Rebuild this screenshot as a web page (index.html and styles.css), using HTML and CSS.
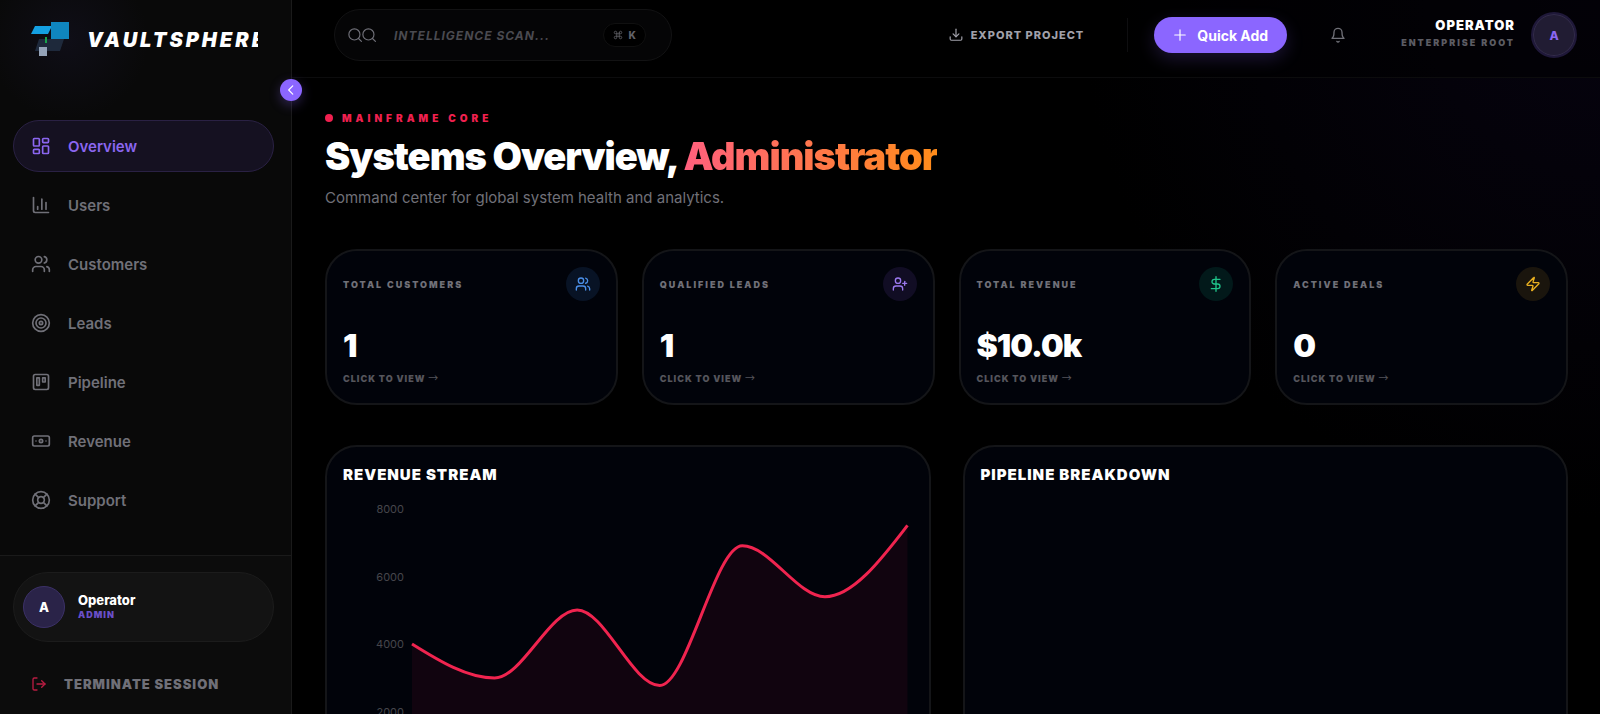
FILE: index.html
```html
<!DOCTYPE html>
<html lang="en">
<head>
<meta charset="UTF-8">
<meta name="viewport" content="width=device-width, initial-scale=1.0">
<title>Vaultsphere</title>
<link rel="stylesheet" href="styles.css">
</head>
<body>
<div class="app">
    <aside class="sidebar">
        <div class="brand">
            <svg class="brand-logo" viewBox="0 0 40 36" aria-hidden="true">
                <path d="M8 17h25l-4 12H4z" fill="#1e293b"/>
                <path d="M4 4h17l-4 8H0z" fill="#14a0e2"/>
                <path d="M20 0h18v17H20z" fill="#0f86bf"/>
                <path d="M14 15h2v6h-2z" fill="#16a34a"/>
                <path d="M8 25h8v9H8z" fill="#94a3b8"/>
            </svg>
            <span class="brand-name">VAULTSPHERE</span>
        </div>
        <button class="collapse" aria-label="Collapse sidebar">
            <svg class="icon" viewBox="0 0 24 24"><path d="m15 19-7-7 7-7"/></svg>
        </button>

        <nav class="nav">
            <a class="nav-item active" href="#">
                <svg class="icon" viewBox="0 0 24 24"><rect x="3" y="3" width="7" height="9" rx="1"/><rect x="14" y="3" width="7" height="5" rx="1"/><rect x="14" y="12" width="7" height="9" rx="1"/><rect x="3" y="16" width="7" height="5" rx="1"/></svg>
                Overview
            </a>
            <a class="nav-item" href="#">
                <svg class="icon" viewBox="0 0 24 24"><path d="M3 3v16a2 2 0 0 0 2 2h16"/><path d="M18 17V9"/><path d="M13 17V5"/><path d="M8 17v-3"/></svg>
                Users
            </a>
            <a class="nav-item" href="#">
                <svg class="icon" viewBox="0 0 24 24"><path d="M16 21v-2a4 4 0 0 0-4-4H6a4 4 0 0 0-4 4v2"/><circle cx="9" cy="7" r="4"/><path d="M22 21v-2a4 4 0 0 0-3-3.87"/><path d="M16 3.13a4 4 0 0 1 0 7.75"/></svg>
                Customers
            </a>
            <a class="nav-item" href="#">
                <svg class="icon" viewBox="0 0 24 24"><circle cx="12" cy="12" r="10"/><circle cx="12" cy="12" r="6"/><circle cx="12" cy="12" r="2"/></svg>
                Leads
            </a>
            <a class="nav-item" href="#">
                <svg class="icon" viewBox="0 0 24 24"><rect x="3" y="3" width="18" height="18" rx="2"/><rect x="7" y="7" width="3" height="9"/><rect x="14" y="7" width="3" height="5"/></svg>
                Pipeline
            </a>
            <a class="nav-item" href="#">
                <svg class="icon" viewBox="0 0 24 24"><rect x="2" y="6" width="20" height="12" rx="2"/><circle cx="12" cy="12" r="2"/><path d="M6 12h.01M18 12h.01"/></svg>
                Revenue
            </a>
            <a class="nav-item" href="#">
                <svg class="icon" viewBox="0 0 24 24"><circle cx="12" cy="12" r="10"/><path d="m4.93 4.93 4.24 4.24"/><path d="m14.83 9.17 4.24-4.24"/><path d="m14.83 14.83 4.24 4.24"/><path d="m9.17 14.83-4.24 4.24"/><circle cx="12" cy="12" r="4"/></svg>
                Support
            </a>
        </nav>

        <div class="sidebar-footer">
            <div class="user-card">
                <span class="user-avatar">A</span>
                <div>
                    <div class="user-name">Operator</div>
                    <div class="user-role">ADMIN</div>
                </div>
            </div>
            <button class="logout">
                <svg class="icon" viewBox="0 0 24 24"><path d="M9 21H5a2 2 0 0 1-2-2V5a2 2 0 0 1 2-2h4"/><path d="m16 17 5-5-5-5"/><path d="M21 12H9"/></svg>
                TERMINATE SESSION
            </button>
        </div>
    </aside>

    <div class="page">
        <header class="topbar">
            <div class="search">
                <span class="search-icons">
                    <svg class="icon" viewBox="0 0 24 24"><circle cx="11" cy="11" r="9.5"/><path d="m23 23-5-5"/></svg>
                    <svg class="icon" viewBox="0 0 24 24"><circle cx="11" cy="11" r="9.5"/><path d="m23 23-5-5"/></svg>
                </span>
                <input class="search-input" type="text" placeholder="INTELLIGENCE SCAN..." aria-label="Search">
                <kbd class="shortcut">
                    <svg class="icon" viewBox="0 0 24 24"><path d="M15 6v12a3 3 0 1 0 3-3H6a3 3 0 1 0 3 3V6a3 3 0 1 0-3 3h12a3 3 0 1 0-3-3"/></svg>
                    K
                </kbd>
            </div>
            <div class="actions">
                <button class="export">
                    <svg class="icon" viewBox="0 0 24 24"><path d="M2 15v4a2 2 0 0 0 2 2h16a2 2 0 0 0 2-2v-4"/><path d="m7 10 5 5 5-5"/><path d="M12 15V2"/></svg>
                    EXPORT PROJECT
                </button>
                <span class="divider"></span>
                <button class="quick-add">
                    <svg class="icon" viewBox="0 0 24 24"><path d="M3 12h18M12 3v18"/></svg>
                    Quick Add
                </button>
                <button class="bell" aria-label="Notifications">
                    <svg class="icon" viewBox="0 0 24 24"><path d="M6 8a6 6 0 0 1 12 0c0 7 3 9 3 9H3s3-2 3-9"/><path d="M10.3 21.5a2 2 0 0 0 3.4 0"/></svg>
                </button>
                <div class="account">
                    <div class="account-text">
                        <div class="account-name">OPERATOR</div>
                        <div class="account-role">ENTERPRISE ROOT</div>
                    </div>
                    <span class="account-avatar">A</span>
                </div>
            </div>
        </header>

        <main class="content">
            <div class="eyebrow"><span class="dot"></span>MAINFRAME CORE</div>
            <h1 class="title">Systems Overview, <span class="title-accent">Administrator</span></h1>
            <p class="subtitle">Command center for global system health and analytics.</p>

            <section class="stats">
                <a class="stat" href="#">
                    <div class="stat-head">
                        <span class="stat-label">TOTAL CUSTOMERS</span>
                        <span class="stat-icon blue"><svg class="icon" viewBox="0 0 24 24"><path d="M16 21v-2a4 4 0 0 0-4-4H6a4 4 0 0 0-4 4v2"/><circle cx="9" cy="7" r="4"/><path d="M22 21v-2a4 4 0 0 0-3-3.87"/><path d="M16 3.13a4 4 0 0 1 0 7.75"/></svg></span>
                    </div>
                    <div class="stat-value">1</div>
                    <div class="stat-link">CLICK TO VIEW <span class="arrow">→</span></div>
                </a>
                <a class="stat" href="#">
                    <div class="stat-head">
                        <span class="stat-label">QUALIFIED LEADS</span>
                        <span class="stat-icon purple"><svg class="icon" viewBox="0 0 24 24"><path d="M16 21v-2a4 4 0 0 0-4-4H6a4 4 0 0 0-4 4v2"/><circle cx="9" cy="7" r="4"/><path d="M19 8v6"/><path d="M22 11h-6"/></svg></span>
                    </div>
                    <div class="stat-value">1</div>
                    <div class="stat-link">CLICK TO VIEW <span class="arrow">→</span></div>
                </a>
                <a class="stat" href="#">
                    <div class="stat-head">
                        <span class="stat-label">TOTAL REVENUE</span>
                        <span class="stat-icon green"><svg class="icon" viewBox="0 0 24 24"><path d="M12 1v22"/><path d="M18 5H9.500a3.500 3.500 0 0 0 0 7h5a3.500 3.500 0 0 1 0 7H5"/></svg></span>
                    </div>
                    <div class="stat-value">$10.0k</div>
                    <div class="stat-link">CLICK TO VIEW <span class="arrow">→</span></div>
                </a>
                <a class="stat" href="#">
                    <div class="stat-head">
                        <span class="stat-label">ACTIVE DEALS</span>
                        <span class="stat-icon amber"><svg class="icon" viewBox="0 0 24 24"><path d="M4 14a1 1 0 0 1-.78-1.63l9.900-10.200a.5.5 0 0 1 .86.46l-1.920 6.020A1 1 0 0 0 13 10h7a1 1 0 0 1 .78 1.630l-9.900 10.200a.5.5 0 0 1-.86-.46l1.920-6.020A1 1 0 0 0 11 14z"/></svg></span>
                    </div>
                    <div class="stat-value">0</div>
                    <div class="stat-link">CLICK TO VIEW <span class="arrow">→</span></div>
                </a>
            </section>

            <section class="panels">
                <div class="panel">
                    <h2 class="panel-title">REVENUE STREAM</h2>
                    <div class="chart">
                        <div class="axis">
                            <span>8000</span>
                            <span>6000</span>
                            <span>4000</span>
                            <span>2000</span>
                            <span>0</span>
                        </div>
                        <svg class="plot" viewBox="0 0 600 270" preserveAspectRatio="none" role="img" aria-label="Revenue stream">
                            <path class="area" d="M0 135C33 151.900 67 168.800 100 168.800C133 168.800 167 101.200 200 101.200C233 101.200 267 176.200 300 176.200C333 176.200 367 37.500 400 37.500C433 37.500 467 88.100 500 88.100C533 88.100 567 52.600 600 17.200V270H0Z"/>
                            <path class="line" d="M0 135C33 151.900 67 168.800 100 168.800C133 168.800 167 101.200 200 101.200C233 101.200 267 176.200 300 176.200C333 176.200 367 37.500 400 37.500C433 37.500 467 88.100 500 88.100C533 88.100 567 52.600 600 17.200"/>
                        </svg>
                    </div>
                </div>
                <div class="panel">
                    <h2 class="panel-title">PIPELINE BREAKDOWN</h2>
                </div>
            </section>
        </main>
    </div>
</div>
</body>
</html>
```
FILE: styles.css
```css
* {
    box-sizing: border-box;
}
body {
    margin: 0;
    background: #000;
    color: #fff;
    font-family: Inter, "Liberation Sans", sans-serif;
}
button {
    font-family: inherit;
    border: none;
    background: none;
    padding: 0;
    cursor: pointer;
}
a {
    color: inherit;
    text-decoration: none;
}
.icon {
    display: block;
    flex-shrink: 0;
    width: 16px;
    height: 16px;
    fill: none;
    stroke: currentColor;
    stroke-width: 2;
    stroke-linecap: round;
    stroke-linejoin: round;
}
.app {
    display: flex;
    height: 100vh;
}

/* Sidebar */
.sidebar {
    position: relative;
    z-index: 2;
    flex: 0 0 292px;
    min-width: 0;
    display: flex;
    flex-direction: column;
    background: radial-gradient(circle at 68px 40px, #0f0e17 0, #090909 80px);
    border-right: 1px solid #1a1a1a;
}
.brand {
    display: flex;
    align-items: center;
    gap: 16px;
    height: 80px;
    padding: 0 33px 0 31px;
}
.brand-logo {
    flex-shrink: 0;
    width: 40px;
    height: 36px;
}
.brand-name {
    flex: 1;
    min-width: 0;
    overflow: hidden;
    font-size: 20px;
    font-weight: 900;
    font-style: italic;
    letter-spacing: 3px;
}
.collapse {
    position: absolute;
    top: 79px;
    right: -11px;
    display: flex;
    align-items: center;
    justify-content: center;
    width: 22px;
    height: 22px;
    border-radius: 50%;
    background: #8b66ff;
    color: #fff;
    box-shadow: 0 4px 12px rgba(139, 102, 255, 0.3);
}
.collapse .icon {
    width: 14px;
    height: 14px;
}
.nav {
    flex: 1;
    display: flex;
    flex-direction: column;
    gap: 7px;
    padding: 40px 17px 0 13px;
}
.nav-item {
    display: flex;
    align-items: center;
    gap: 17px;
    height: 52px;
    padding: 0 17px;
    border: 1px solid transparent;
    border-radius: 26px;
    color: #707078;
    font-size: 15px;
    font-weight: 600;
}
.nav-item .icon {
    width: 20px;
    height: 20px;
}
.nav-item.active {
    background: #151121;
    border-color: #2a2144;
    color: #8b66f0;
}
.sidebar-footer {
    padding: 16px 17px 4px 13px;
    background: #0c0c0c;
    border-top: 1px solid #1a1a1a;
}
.user-card {
    display: flex;
    align-items: center;
    gap: 13px;
    height: 70px;
    padding: 0 9px;
    background: #131313;
    border: 1px solid #1c1c1c;
    border-radius: 35px;
}
.user-avatar {
    display: flex;
    align-items: center;
    justify-content: center;
    width: 42px;
    height: 42px;
    border: 1px solid #3c3168;
    border-radius: 50%;
    background: #2a2348;
    font-size: 13px;
    font-weight: 800;
}
.user-name {
    font-size: 13px;
    font-weight: 800;
    line-height: 16px;
}
.user-role {
    color: #6a4fc8;
    font-size: 9px;
    font-weight: 900;
    line-height: 14px;
    letter-spacing: 1px;
}
.logout {
    display: flex;
    align-items: center;
    gap: 17px;
    height: 52px;
    margin-top: 16px;
    padding: 0 18px;
    color: #707078;
    font-size: 13px;
    font-weight: 900;
    letter-spacing: 1px;
}
.logout .icon {
    color: #b91c42;
}

/* Top bar */
.page {
    flex: 1;
    min-width: 0;
    display: flex;
    flex-direction: column;
    background: radial-gradient(circle at 100% 0, #06030f 0, #000 520px);
}
.topbar {
    flex: 0 0 78px;
    display: flex;
    justify-content: space-between;
    padding: 9px 23px 0 42px;
    background: rgba(0, 0, 0, 0.5);
    border-bottom: 1px solid #0c0c0d;
}
.search {
    display: flex;
    align-items: center;
    width: 338px;
    height: 52px;
    padding: 0 25px 0 13px;
    background: #050506;
    border: 1px solid #121213;
    border-radius: 26px;
}
.search-icons {
    display: flex;
    color: #707078;
}
.search-icons .icon {
    width: 14px;
    height: 14px;
    stroke-width: 2;
    overflow: visible;
}
.search-input {
    flex: 1;
    min-width: 0;
    margin-left: 18px;
    padding: 0;
    border: none;
    outline: none;
    background: none;
    color: #fff;
    font-family: inherit;
    font-size: 12px;
    font-weight: 700;
    font-style: italic;
    letter-spacing: 1px;
}
.search-input::placeholder {
    color: #4a4a50;
}
.shortcut {
    display: flex;
    align-items: center;
    gap: 6px;
    height: 24px;
    padding: 0 9px;
    border: 1px solid #101010;
    border-radius: 12px;
    background: #000;
    color: #626268;
    font-family: inherit;
    font-size: 10px;
    font-weight: 800;
}
.shortcut .icon {
    width: 10px;
    height: 10px;
}
.actions {
    display: flex;
    align-items: center;
    height: 52px;
}
.export {
    display: flex;
    align-items: center;
    gap: 8px;
    color: #a1a1aa;
    font-size: 11px;
    font-weight: 800;
    letter-spacing: 1px;
}
.export .icon {
    width: 14px;
    height: 14px;
}
.divider {
    width: 1px;
    height: 34px;
    margin: 0 26px 0 43px;
    background: #0e0e10;
}
.quick-add {
    display: flex;
    align-items: center;
    gap: 10px;
    height: 36px;
    padding: 0 19px;
    border-radius: 18px;
    background: #8b66ff;
    color: #fff;
    font-size: 14px;
    font-weight: 700;
    box-shadow: 0 6px 18px rgba(139, 102, 255, 0.2);
}
.quick-add .icon {
    width: 14px;
    height: 14px;
}
.bell {
    margin: 0 55px 0 43px;
    color: #707078;
}
.account {
    display: flex;
    align-items: center;
    gap: 16px;
    text-align: right;
}
.account-name {
    font-size: 13px;
    font-weight: 900;
    line-height: 16px;
    letter-spacing: 1px;
}
.account-role {
    color: #5c5c63;
    font-size: 9px;
    font-weight: 900;
    line-height: 20px;
    letter-spacing: 2px;
}
.account-avatar {
    display: flex;
    align-items: center;
    justify-content: center;
    width: 46px;
    height: 46px;
    border: 2px solid #1f1839;
    border-radius: 50%;
    background: #211c33;
    box-shadow: inset 0 0 0 1px #342d4c;
    color: #8b66f0;
    font-size: 12px;
    font-weight: 800;
}

/* Content */
.content {
    flex: 1;
    overflow: auto;
    scrollbar-width: none;
    padding: 32px 32px 32px 33px;
}
.eyebrow {
    display: flex;
    align-items: center;
    gap: 9px;
    color: #f0204f;
    font-size: 10px;
    font-weight: 900;
    line-height: 16px;
    letter-spacing: 4px;
}
.dot {
    width: 8px;
    height: 8px;
    border-radius: 50%;
    background: #f0204f;
}
.title {
    margin: 9px 0 0;
    font-size: 38px;
    font-weight: 900;
    line-height: 42px;
    letter-spacing: -1px;
}
.title-accent {
    background: linear-gradient(90deg, #ff5f7e, #ff8c1a);
    background-clip: text;
    -webkit-background-clip: text;
    color: transparent;
}
.subtitle {
    margin: 10px 0 0;
    color: #707078;
    font-size: 15px;
    line-height: 22px;
}
.stats {
    display: grid;
    grid-template-columns: repeat(4, minmax(0, 1fr));
    gap: 24px;
    margin-top: 40px;
}
.stat,
.panel {
    background: #01030a;
    border: 2px solid #141518;
    border-radius: 32px;
    padding: 16px;
}
.stat-head {
    display: flex;
    align-items: center;
    justify-content: space-between;
}
.stat-label {
    color: #707078;
    font-size: 9px;
    font-weight: 900;
    letter-spacing: 2px;
}
.stat-icon {
    display: flex;
    align-items: center;
    justify-content: center;
    width: 34px;
    height: 34px;
    border-radius: 50%;
}
.blue {
    background: #081325;
    color: #4b8fe8;
}
.purple {
    background: #110d24;
    color: #9a78ee;
}
.green {
    background: #02191a;
    color: #20c48a;
}
.amber {
    background: #1a150d;
    color: #eab020;
}
.stat-value {
    margin-top: 25px;
    font-size: 32px;
    font-weight: 900;
    line-height: 40px;
    letter-spacing: -1px;
}
.stat-link {
    margin-top: 5px;
    color: #55555c;
    font-size: 9px;
    font-weight: 900;
    line-height: 16px;
    letter-spacing: 1px;
}
.arrow {
    font-family: "Noto Sans CJK JP", sans-serif;
    font-size: 10px;
    font-weight: 400;
    line-height: 1;
}
.panels {
    display: grid;
    grid-template-columns: repeat(2, minmax(0, 1fr));
    gap: 32px;
    margin-top: 40px;
}
.panel-title {
    margin: 0;
    font-size: 15px;
    font-weight: 900;
    line-height: 24px;
    letter-spacing: 1px;
}
.chart {
    display: flex;
    gap: 8px;
    height: 272px;
    margin: 21px 5px 32px 0;
}
.axis {
    display: flex;
    flex-direction: column;
    justify-content: space-between;
    width: 61px;
    margin: -7px 0;
    color: #46464c;
    font-size: 11px;
    line-height: 16px;
    text-align: right;
}
.plot {
    flex: 1;
    min-width: 0;
    height: 100%;
    overflow: visible;
}
.area {
    fill: #f0204f;
    fill-opacity: 0.07;
}
.line {
    fill: none;
    stroke: #f0244f;
    stroke-width: 3;
    vector-effect: non-scaling-stroke;
}
```
